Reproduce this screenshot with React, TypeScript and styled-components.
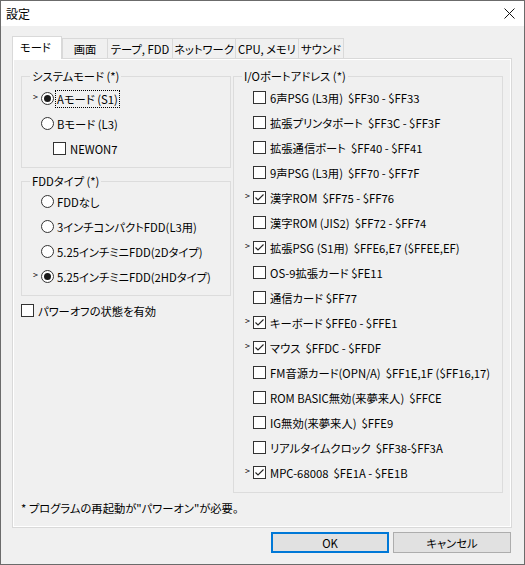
import React from "react";
import styled, { createGlobalStyle } from "styled-components";

const GlobalStyle = createGlobalStyle`
    html, body {
        margin: 0;
        padding: 0;
        background: #f0f0f0;
    }
    body {
        font-family: "Noto Sans CJK JP", "Noto Sans", sans-serif;
        font-size: 11.3px;
        color: #000;
        font-feature-settings: "palt";
    }
`;

// Data for the I/O port list on the right side.
const ioPorts = [
    { label: "6声PSG (L3用)  $FF30 - $FF33", checked: false },
    { label: "拡張プリンタポート  $FF3C - $FF3F", checked: false },
    { label: "拡張通信ポート  $FF40 - $FF41", checked: false },
    { label: "9声PSG (L3用)  $FF70 - $FF7F", checked: false },
    { label: "漢字ROM  $FF75 - $FF76", checked: true },
    { label: "漢字ROM (JIS2)  $FF72 - $FF74", checked: false },
    { label: "拡張PSG (S1用)  $FFE6,E7 ($FFEE,EF)", checked: true },
    { label: "OS-9拡張カード $FE11", checked: false },
    { label: "通信カード $FF77", checked: false },
    { label: "キーボード $FFE0 - $FFE1", checked: true },
    { label: "マウス  $FFDC - $FFDF", checked: true },
    { label: "FM音源カード(OPN/A)  $FF1E,1F ($FF16,17)", checked: false },
    { label: "ROM BASIC無効(来夢来人)  $FFCE", checked: false },
    { label: "IG無効(来夢来人)  $FFE9", checked: false },
    { label: "リアルタイムクロック  $FF38-$FF3A", checked: false },
    { label: "MPC-68008  $FE1A - $FE1B", checked: true },
];

const fddTypes = [
    { label: "FDDなし", checked: false },
    { label: "3インチコンパクトFDD(L3用)", checked: false },
    { label: "5.25インチミニFDD(2Dタイプ)", checked: false },
    { label: "5.25インチミニFDD(2HDタイプ)", checked: true },
];

const tabs = [
    { name: "モード", width: 50 },
    { name: "画面", width: 46 },
    { name: "テープ, FDD", width: 66 },
    { name: "ネットワーク", width: 64 },
    { name: "CPU, メモリ", width: 64 },
    { name: "サウンド", width: 46 },
];

const Window = styled.div`
    width: 525px;
    height: 565px;
    box-sizing: border-box;
    border: 1px solid #6b6b6b;
    display: flex;
    flex-direction: column;
    background: #f0f0f0;
`;

const TitleBar = styled.div`
    height: 25px;
    background: #fff;
    display: flex;
    align-items: center;
    justify-content: space-between;
    padding: 0 9px 0 5px;
`;

const Title = styled.span`
    font-size: 12px;
`;

const Body = styled.div`
    flex: 1;
    display: flex;
    flex-direction: column;
    padding: 10px 13px 0 11px;
`;

const TabStrip = styled.div`
    display: flex;
    align-items: flex-end;
    height: 22px;
`;

const Tab = styled.div<{ $active?: boolean; $w: number }>`
    box-sizing: border-box;
    width: ${(p) => p.$w}px;
    flex: none;
    height: ${(p) => (p.$active ? 23 : 20)}px;
    margin-bottom: ${(p) => (p.$active ? -1 : 0)}px;
    margin-right: ${(p) => (p.$active ? 0 : -1)}px;
    position: relative;
    z-index: ${(p) => (p.$active ? 2 : 1)};
    background: ${(p) => (p.$active ? "#fff" : "#f0f0f0")};
    border: 1px solid #d9d9d9;
    border-bottom: none;
    display: flex;
    align-items: center;
    justify-content: ${(p) => (p.$active ? "flex-start" : "center")};
    padding: ${(p) => (p.$active ? "0 0 2px 7px" : "0")};
    white-space: nowrap;
`;

const Panel = styled.div`
    box-sizing: border-box;
    width: 500px;
    height: 470px;
    border: 1px solid #d9d9d9;
    box-shadow: inset 0 0 0 1px #fff;
    padding: 17px 8px 0 8px;
    display: flex;
    flex-direction: column;
`;

const Columns = styled.div`
    display: flex;
    gap: 2px;
`;

const LeftColumn = styled.div`
    width: 210px;
    display: flex;
    flex-direction: column;
`;

const Group = styled.div<{ $h: number; $top?: number; $w?: number; $pad: number }>`
    box-sizing: border-box;
    position: relative;
    width: ${(p) => (p.$w ? `${p.$w}px` : "auto")};
    height: ${(p) => p.$h}px;
    margin-top: ${(p) => p.$top ?? 0}px;
    border: 1px solid #dcdcdc;
    padding: ${(p) => p.$pad}px 0 0 0;
    display: flex;
    flex-direction: column;
`;

const Legend = styled.span`
    position: absolute;
    top: -9px;
    left: 8px;
    padding: 0 2px;
    background: #f0f0f0;
    line-height: 16px;
    white-space: nowrap;
`;

const Row = styled.div<{ $indent?: number; $top?: number }>`
    height: 25px;
    display: flex;
    align-items: center;
    padding-left: ${(p) => p.$indent ?? 11}px;
    margin-top: ${(p) => p.$top ?? 0}px;
    white-space: pre;
`;

const Marker = styled.span`
    width: 8px;
    flex: none;
    font-size: 9px;
    line-height: 9px;
    align-self: flex-start;
    margin-top: 6px;
`;

const RadioCircle = styled.span<{ $on?: boolean }>`
    box-sizing: border-box;
    width: 13px;
    height: 13px;
    border-radius: 50%;
    border: 1px solid #333;
    background: #fff;
    display: flex;
    align-items: center;
    justify-content: center;
    margin-right: 3px;
    flex: none;
    &::after {
        content: "";
        display: ${(p) => (p.$on ? "block" : "none")};
        width: 7px;
        height: 7px;
        border-radius: 50%;
        background: #1a1a1a;
    }
`;

const CheckBox = styled.span`
    box-sizing: border-box;
    width: 13px;
    height: 13px;
    border: 1px solid #333;
    background: #fff;
    margin-right: 4px;
    flex: none;
    display: flex;
`;

const Focused = styled.span`
    outline: 1px dotted #000;
    outline-offset: 0;
    padding: 0 1px;
    margin-left: -1px;
`;

const Note = styled.div`
    margin-top: 8px;
    height: 14px;
    line-height: 14px;
`;

const ButtonRow = styled.div`
    display: flex;
    justify-content: flex-end;
    gap: 4px;
    margin-top: 4px;
`;

const Button = styled.button<{ $default?: boolean }>`
    box-sizing: border-box;
    width: 118px;
    height: 21px;
    font: inherit;
    font-feature-settings: "palt";
    background: #e1e1e1;
    border: ${(p) => (p.$default ? "2px solid #0078d7" : "1px solid #adadad")};
    padding: 0;
    color: #000;
`;

function Check({ checked }: { checked: boolean }) {
    return (
        <CheckBox>
            {checked && (
                <svg width="11" height="11" viewBox="0 0 11 11">
                    <polyline points="1.5,5.5 4,8 9.5,2.5" fill="none" stroke="#222" strokeWidth="1.1" />
                </svg>
            )}
        </CheckBox>
    );
}

export default function App() {
    return (
        <>
            <GlobalStyle />
            <Window>
                <TitleBar>
                    <Title>設定</Title>
                    <svg width="11" height="11" viewBox="0 0 11 11">
                        <path d="M0.5 0.5 L10.5 10.5 M10.5 0.5 L0.5 10.5" stroke="#111" strokeWidth="1" />
                    </svg>
                </TitleBar>
                <Body>
                    <TabStrip>
                        {tabs.map((t, i) => (
                            <Tab key={t.name} $active={i === 0} $w={t.width}>
                                {t.name}
                            </Tab>
                        ))}
                    </TabStrip>
                    <Panel>
                        <Columns>
                            <LeftColumn>
                                <Group $h={92} $pad={9}>
                                    <Legend>システムモード (*)</Legend>
                                    <Row>
                                        <Marker>&gt;</Marker>
                                        <RadioCircle $on />
                                        <Focused>Aモード (S1)</Focused>
                                    </Row>
                                    <Row>
                                        <Marker />
                                        <RadioCircle />
                                        Bモード (L3)
                                    </Row>
                                    <Row $indent={31}>
                                        <Check checked={false} />
                                        NEWON7
                                    </Row>
                                </Group>
                                <Group $h={115} $top={13} $pad={7}>
                                    <Legend>FDDタイプ (*)</Legend>
                                    {fddTypes.map((f) => (
                                        <Row key={f.label}>
                                            <Marker>{f.checked ? ">" : ""}</Marker>
                                            <RadioCircle $on={f.checked} />
                                            {f.label}
                                        </Row>
                                    ))}
                                </Group>
                                <Row $indent={0} $top={2}>
                                    <Check checked={false} />
                                    パワーオフの状態を有効
                                </Row>
                            </LeftColumn>
                            <Group $h={417} $w={270} $pad={8}>
                                <Legend>I/Oポートアドレス (*)</Legend>
                                {ioPorts.map((p) => (
                                    <Row key={p.label}>
                                        <Marker>{p.checked ? ">" : ""}</Marker>
                                        <Check checked={p.checked} />
                                        {p.label}
                                    </Row>
                                ))}
                            </Group>
                        </Columns>
                        <Note>* プログラムの再起動が"パワーオン"が必要。</Note>
                    </Panel>
                    <ButtonRow>
                        <Button $default>OK</Button>
                        <Button>キャンセル</Button>
                    </ButtonRow>
                </Body>
            </Window>
        </>
    );
}
